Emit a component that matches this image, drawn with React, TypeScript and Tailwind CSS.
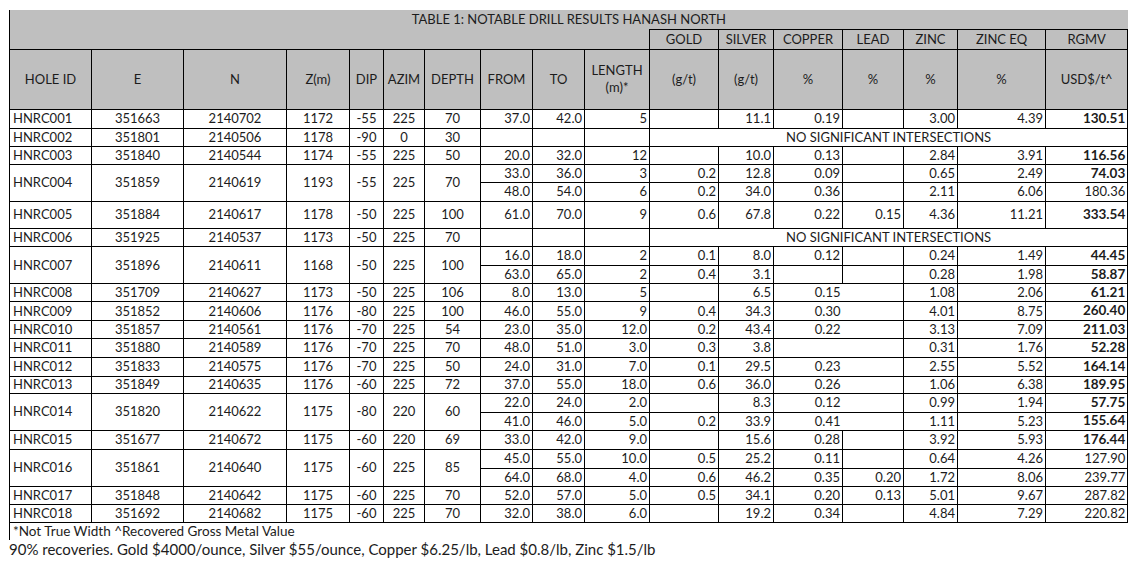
type Seg = {
  v: string[];
  bold?: boolean;
  h: string;
};

type Hole = {
  id: string;
  e: string;
  n: string;
  z: string;
  dip: string;
  azim: string;
  depth: string;
  segs: Seg[] | null;
  h?: string;
  noCuLine?: boolean;
};

const HOLES: Hole[] = [
  { id: "HNRC001", e: "351663", n: "2140702", z: "1172", dip: "-55", azim: "225", depth: "70", segs: [{ v: ["37.0", "42.0", "5", "", "11.1", "0.19", "", "3.00", "4.39", "130.51"], bold: true, h: "h-[19px]" }] },
  { id: "HNRC002", e: "351801", n: "2140506", z: "1178", dip: "-90", azim: "0", depth: "30", segs: null, h: "h-[18.5px]" },
  { id: "HNRC003", e: "351840", n: "2140544", z: "1174", dip: "-55", azim: "225", depth: "50", segs: [{ v: ["20.0", "32.0", "12", "", "10.0", "0.13", "", "2.84", "3.91", "116.56"], bold: true, h: "h-[17.5px]" }] },
  {
    id: "HNRC004", e: "351859", n: "2140619", z: "1193", dip: "-55", azim: "225", depth: "70",
    segs: [
      { v: ["33.0", "36.0", "3", "0.2", "12.8", "0.09", "", "0.65", "2.49", "74.03"], bold: true, h: "h-[18.5px]" },
      { v: ["48.0", "54.0", "6", "0.2", "34.0", "0.36", "", "2.11", "6.06", "180.36"], h: "h-[18.5px]" },
    ],
  },
  { id: "HNRC005", e: "351884", n: "2140617", z: "1178", dip: "-50", azim: "225", depth: "100", segs: [{ v: ["61.0", "70.0", "9", "0.6", "67.8", "0.22", "0.15", "4.36", "11.21", "333.54"], bold: true, h: "h-[27.5px]" }] },
  { id: "HNRC006", e: "351925", n: "2140537", z: "1173", dip: "-50", azim: "225", depth: "70", segs: null, h: "h-[18px]" },
  {
    id: "HNRC007", e: "351896", n: "2140611", z: "1168", dip: "-50", azim: "225", depth: "100",
    segs: [
      { v: ["16.0", "18.0", "2", "0.1", "8.0", "0.12", "", "0.24", "1.49", "44.45"], bold: true, h: "h-[18.5px]" },
      { v: ["63.0", "65.0", "2", "0.4", "3.1", "", "", "0.28", "1.98", "58.87"], bold: true, h: "h-[18.5px]" },
    ],
  },
  { id: "HNRC008", e: "351709", n: "2140627", z: "1173", dip: "-50", azim: "225", depth: "106", noCuLine: true, segs: [{ v: ["8.0", "13.0", "5", "", "6.5", "0.15", "", "1.08", "2.06", "61.21"], bold: true, h: "h-[18px]" }] },
  { id: "HNRC009", e: "351852", n: "2140606", z: "1176", dip: "-80", azim: "225", depth: "100", noCuLine: true, segs: [{ v: ["46.0", "55.0", "9", "0.4", "34.3", "0.30", "", "4.01", "8.75", "260.40"], bold: true, h: "h-[19px]" }] },
  { id: "HNRC010", e: "351857", n: "2140561", z: "1176", dip: "-70", azim: "225", depth: "54", noCuLine: true, segs: [{ v: ["23.0", "35.0", "12.0", "0.2", "43.4", "0.22", "", "3.13", "7.09", "211.03"], bold: true, h: "h-[18px]" }] },
  { id: "HNRC011", e: "351880", n: "2140589", z: "1176", dip: "-70", azim: "225", depth: "70", noCuLine: true, segs: [{ v: ["48.0", "51.0", "3.0", "0.3", "3.8", "", "", "0.31", "1.76", "52.28"], bold: true, h: "h-[18.5px]" }] },
  { id: "HNRC012", e: "351833", n: "2140575", z: "1176", dip: "-70", azim: "225", depth: "50", noCuLine: true, segs: [{ v: ["24.0", "31.0", "7.0", "0.1", "29.5", "0.23", "", "2.55", "5.52", "164.14"], bold: true, h: "h-[19px]" }] },
  { id: "HNRC013", e: "351849", n: "2140635", z: "1176", dip: "-60", azim: "225", depth: "72", noCuLine: true, segs: [{ v: ["37.0", "55.0", "18.0", "0.6", "36.0", "0.26", "", "1.06", "6.38", "189.95"], bold: true, h: "h-[17.5px]" }] },
  {
    id: "HNRC014", e: "351820", n: "2140622", z: "1175", dip: "-80", azim: "220", depth: "60", noCuLine: true,
    segs: [
      { v: ["22.0", "24.0", "2.0", "", "8.3", "0.12", "", "0.99", "1.94", "57.75"], bold: true, h: "h-[18.5px]" },
      { v: ["41.0", "46.0", "5.0", "0.2", "33.9", "0.41", "", "1.11", "5.23", "155.64"], bold: true, h: "h-[18px]" },
    ],
  },
  { id: "HNRC015", e: "351677", n: "2140672", z: "1175", dip: "-60", azim: "220", depth: "69", segs: [{ v: ["33.0", "42.0", "9.0", "", "15.6", "0.28", "", "3.92", "5.93", "176.44"], bold: true, h: "h-[19px]" }] },
  {
    id: "HNRC016", e: "351861", n: "2140640", z: "1175", dip: "-60", azim: "225", depth: "85",
    segs: [
      { v: ["45.0", "55.0", "10.0", "0.5", "25.2", "0.11", "", "0.64", "4.26", "127.90"], h: "h-[19px]" },
      { v: ["64.0", "68.0", "4.0", "0.6", "46.2", "0.35", "0.20", "1.72", "8.06", "239.77"], h: "h-[18.5px]" },
    ],
  },
  { id: "HNRC017", e: "351848", n: "2140642", z: "1175", dip: "-60", azim: "225", depth: "70", segs: [{ v: ["52.0", "57.0", "5.0", "0.5", "34.1", "0.20", "0.13", "5.01", "9.67", "287.82"], h: "h-[18px]" }] },
  { id: "HNRC018", e: "351692", n: "2140682", z: "1175", dip: "-60", azim: "225", depth: "70", segs: [{ v: ["32.0", "38.0", "6.0", "", "19.2", "0.34", "", "4.84", "7.29", "220.82"], h: "h-[18px]" }] },
];

const WIDTHS = [82, 92, 103, 63, 34, 41, 56, 52, 52, 65, 69, 55, 69, 61, 54, 88, 82];

const cell = "border border-black p-0 leading-none whitespace-nowrap";
const head = "border border-black p-0 leading-[17px] text-center font-normal";

function HoleRows({ hole }: { hole: Hole }) {
  const span = hole.segs ? hole.segs.length : 1;
  const left = (
    <>
      <td rowSpan={span} className={`${cell} pl-[3px] text-left`}>{hole.id}</td>
      <td rowSpan={span} className={`${cell} text-center`}>{hole.e}</td>
      <td rowSpan={span} className={`${cell} text-center`}>{hole.n}</td>
      <td rowSpan={span} className={`${cell} text-center`}>{hole.z}</td>
      <td rowSpan={span} className={`${cell} text-center`}>{hole.dip}</td>
      <td rowSpan={span} className={`${cell} text-center`}>{hole.azim}</td>
      <td rowSpan={span} className={`${cell} text-center`}>{hole.depth}</td>
    </>
  );

  if (!hole.segs) {
    return (
      <tr className={hole.h}>
        {left}
        <td className={cell}></td>
        <td className={cell}></td>
        <td className={cell}></td>
        <td colSpan={7} className={`${cell} text-center`}>
          NO SIGNIFICANT INTERSECTIONS
        </td>
      </tr>
    );
  }

  return (
    <>
      {hole.segs.map((s, i) => (
        <tr key={i} className={s.h}>
          {i === 0 ? left : null}
          {s.v.map((val, j) => {
            let cls = `${cell} pr-[2px] text-right`;
            if (hole.noCuLine && j === 5) cls += " border-r-0";
            if (hole.noCuLine && j === 6) cls += " border-l-0";
            if (j === 9 && s.bold) {
              return (
                <td key={j} className={`${cls} font-bold text-[13.5px]`}>
                  {val}
                </td>
              );
            }
            return (
              <td key={j} className={cls}>
                {val}
              </td>
            );
          })}
        </tr>
      ))}
    </>
  );
}

export default function App() {
  return (
    <div className="w-[1131px] h-[573px] bg-white pl-[9px] pt-[10px] font-['Lato',sans-serif] text-[13px] text-[#1c1c1c]">
      <table className="table-fixed border-collapse w-[1118px]">
        <colgroup>
          {WIDTHS.map((w, i) => (
            <col key={i} style={{ width: w }} />
          ))}
        </colgroup>
        <thead className="bg-[#bfbfbf]">
          <tr className="h-[19px]">
            <th colSpan={17} className="border-l border-black p-0 text-center font-normal leading-none">
              TABLE 1: NOTABLE DRILL RESULTS HANASH NORTH
            </th>
          </tr>
          <tr className="h-[20px]">
            <th colSpan={10} className="border-l border-black p-0"></th>
            <th className={head}>GOLD</th>
            <th className={head}>SILVER</th>
            <th className={head}>COPPER</th>
            <th className={head}>LEAD</th>
            <th className={head}>ZINC</th>
            <th className={head}>ZINC EQ</th>
            <th className={head}>RGMV</th>
          </tr>
          <tr className="h-[60px]">
            <th className={head}>HOLE ID</th>
            <th className={head}>E</th>
            <th className={head}>N</th>
            <th className={head}>Z(m)</th>
            <th className={head}>DIP</th>
            <th className={head}>AZIM</th>
            <th className={head}>DEPTH</th>
            <th className={head}>FROM</th>
            <th className={head}>TO</th>
            <th className={head}>
              LENGTH
              <br />
              (m)*
            </th>
            <th className={head}>(g/t)</th>
            <th className={head}>(g/t)</th>
            <th className={head}>%</th>
            <th className={head}>%</th>
            <th className={head}>%</th>
            <th className={head}>%</th>
            <th className={head}>USD$/t^</th>
          </tr>
        </thead>
        <tbody className="bg-white">
          {HOLES.map((h) => (
            <HoleRows key={h.id} hole={h} />
          ))}
        </tbody>
      </table>
      <div className="h-[17px] border-l border-black pl-[3px] text-[13.5px] leading-[17px]">
        *Not True Width ^Recovered Gross Metal Value
      </div>
      <div className="text-[15px] leading-[19px]">
        90% recoveries. Gold $4000/ounce, Silver $55/ounce, Copper $6.25/lb, Lead $0.8/lb, Zinc $1.5/lb
      </div>
    </div>
  );
}
